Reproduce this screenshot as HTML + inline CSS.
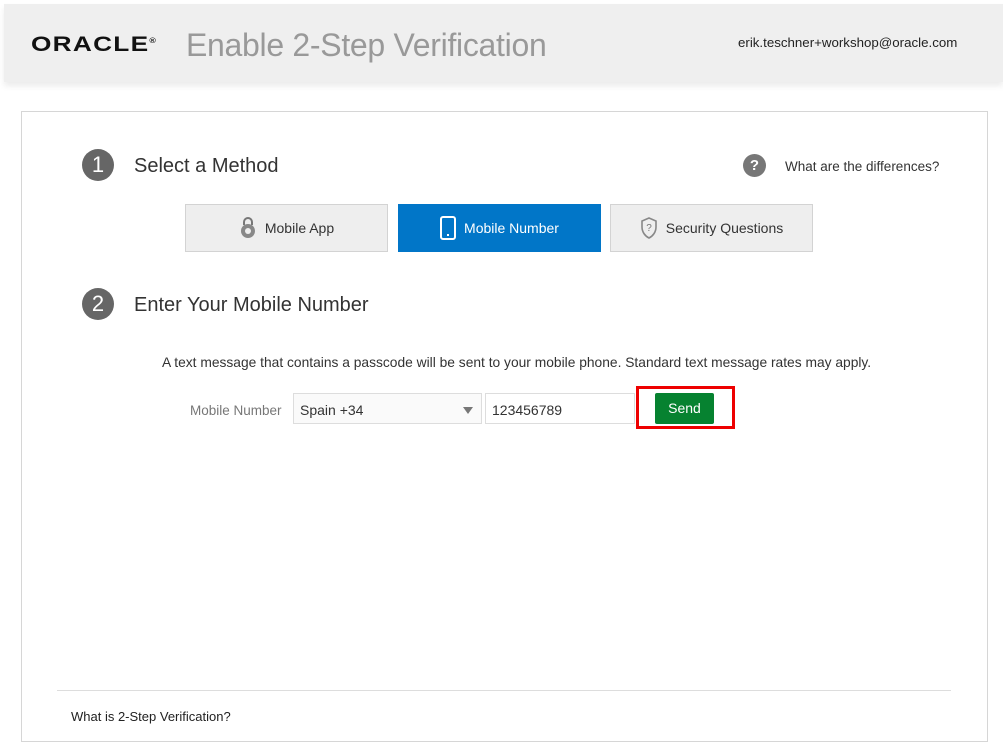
<!DOCTYPE html>
<html><head><meta charset="utf-8"><style>
*{margin:0;padding:0;box-sizing:border-box}
body{width:1003px;height:748px;background:#fff;font-family:"Liberation Sans",sans-serif;position:relative;overflow:hidden;color:#333}
.hdr{position:absolute;left:4px;top:4px;width:999px;height:78px;background:#efefef;box-shadow:0 4px 6px rgba(0,0,0,.08)}
.logo{position:absolute;left:31px;top:33px;font-size:21px;font-weight:bold;letter-spacing:1px;color:#111;transform:scaleX(1.25);transform-origin:left}
.title{position:absolute;left:186px;top:27px;font-size:32px;color:#999;letter-spacing:-0.3px}
.email{position:absolute;left:738px;top:35px;font-size:13.3px;color:#222}
.box{position:absolute;left:21px;top:111px;width:967px;height:631px;border:1px solid #d6d6d6}
.num{position:absolute;width:32px;height:32px;border-radius:50%;background:#666;color:#fff;font-size:22px;text-align:center;line-height:32px}
.h{position:absolute;font-size:20px;color:#333}
.q{position:absolute;left:743px;top:154px;width:23px;height:23px;border-radius:50%;background:#777;color:#fff;font-weight:bold;font-size:15px;text-align:center;line-height:23px}
.btn{position:absolute;top:204px;width:203px;height:48px;background:#eee;border:1px solid #d3d3d3;font-size:14px;color:#333;display:flex;align-items:center;justify-content:center;gap:8px}
.btn.on{background:#0176c8;color:#fff;border-color:#0176c8}
.txt{position:absolute;left:162px;top:355px;font-size:13.8px;color:#333}
.lbl{position:absolute;left:190px;top:403px;font-size:13.5px;color:#777}
.sel{position:absolute;left:293px;top:393px;width:189px;height:31px;border:1px solid #ddd;background:#fafafa;font-size:14px;padding:8px 6px}
.arr{position:absolute;right:8px;top:13px;border-left:5px solid transparent;border-right:5px solid transparent;border-top:7px solid #777}
.inp{position:absolute;left:485px;top:393px;width:150px;height:31px;border:1px solid #ddd;font-size:14px;padding:8px 6px}
.red{position:absolute;left:636px;top:386px;width:99px;height:43px;border:3px solid #e00}
.send{position:absolute;left:655px;top:393px;width:59px;height:31px;background:#068230;border-radius:2px;color:#fff;font-size:14px;text-align:center;line-height:31px}
.foot{position:absolute;left:57px;top:690px;width:894px;border-top:1px solid #ddd}
.ft{position:absolute;left:71px;top:709px;font-size:13px;color:#222}
</style></head><body>
<div class="hdr"></div>
<div class="logo">ORACLE<sup style="font-size:7px">®</sup></div>
<div class="title">Enable 2-Step Verification</div>
<div class="email">erik.teschner+workshop@oracle.com</div>
<div class="box"></div>
<div class="num" style="left:82px;top:149px">1</div>
<div class="h" style="left:134px;top:155px">Select a Method</div>
<div class="q">?</div>
<div style="position:absolute;left:785px;top:159px;font-size:13.5px;color:#333">What are the differences?</div>
<div class="btn" style="left:185px"><svg width="18" height="22" viewBox="0 0 18 22"><path d="M5 8V5a4 4 0 0 1 8 0v3" fill="none" stroke="#777" stroke-width="2"/><circle cx="9" cy="14" r="7" fill="#888"/><circle cx="9" cy="14" r="3" fill="#eee"/></svg>Mobile App</div>
<div class="btn on" style="left:398px"><svg width="16" height="24" viewBox="0 0 16 24"><rect x="1" y="1" width="14" height="22" rx="2" fill="none" stroke="#fff" stroke-width="2"/><rect x="7" y="18" width="2" height="2" fill="#fff"/></svg>Mobile Number</div>
<div class="btn" style="left:610px"><svg width="18" height="22" viewBox="0 0 18 22"><path d="M9 1L2 4v6c0 5 3 9 7 11 4-2 7-6 7-11V4z" fill="none" stroke="#888" stroke-width="1.6"/><text x="9" y="14" font-size="10" text-anchor="middle" fill="#777" font-family="Liberation Sans">?</text></svg>Security Questions</div>
<div class="num" style="left:82px;top:288px">2</div>
<div class="h" style="left:134px;top:294px">Enter Your Mobile Number</div>
<div class="txt">A text message that contains a passcode will be sent to your mobile phone. Standard text message rates may apply.</div>
<div class="lbl">Mobile Number</div>
<div class="sel">Spain +34<div class="arr"></div></div>
<div class="inp">123456789</div>
<div class="red"></div>
<div class="send">Send</div>
<div class="foot"></div>
<div class="ft">What is 2-Step Verification?</div>
</body></html>
